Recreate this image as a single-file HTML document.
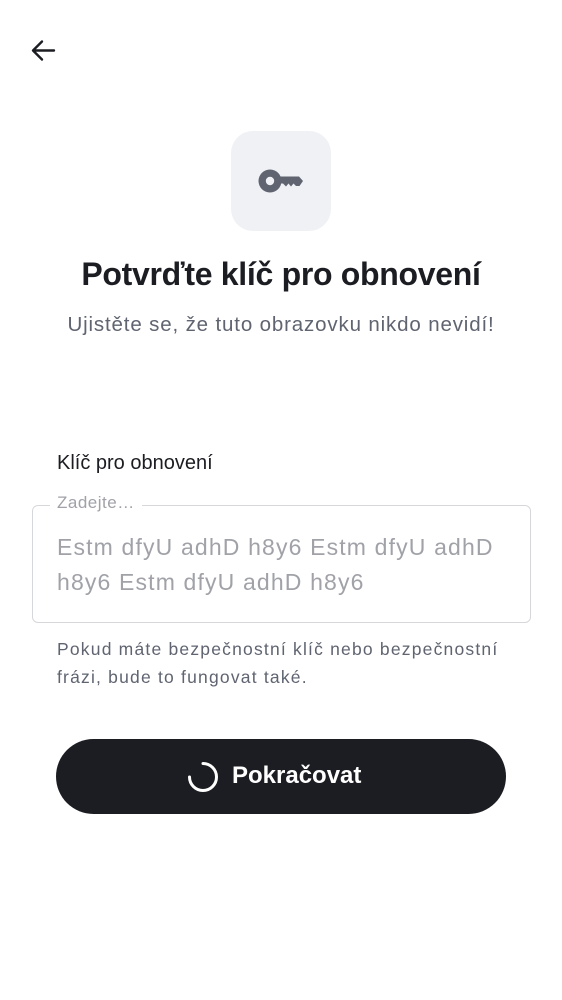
<!DOCTYPE html>
<html><head><meta charset="utf-8"><style>
*{margin:0;padding:0;box-sizing:border-box}
body{width:562px;height:1000px;background:#fff;font-family:"Liberation Sans",Roboto,sans-serif;position:relative;overflow:hidden;color:#1c1d22}
.abs{position:absolute}
</style></head><body>
<svg class="abs" style="left:30px;top:38px" width="26" height="26" viewBox="0 0 26 26"><path d="M24 12.5H4M12 3.5L3 12.5l9 9" fill="none" stroke="#1c1d22" stroke-width="2.4" stroke-linecap="round" stroke-linejoin="round"/></svg>
<div class="abs" style="left:231px;top:131px;width:100px;height:100px;border-radius:22px;background:#f0f1f5"></div>
<svg class="abs" style="left:256px;top:166px" width="50" height="30" viewBox="0 0 50 30">
<circle cx="14" cy="15" r="11.5" fill="#5f6470"/><circle cx="14" cy="15" r="4.2" fill="#f0f1f5"/>
<path d="M22 10.5H43l4 4.5-3.5 5h-3.5l-2.5-2.5-2.5 3-2.5-3-2.5 3-3-3H22z" fill="#5f6470"/></svg>
<div class="abs" style="left:0;width:562px;top:256px;text-align:center;font-size:32px;font-weight:700;letter-spacing:-0.3px">Potvrďte klíč pro obnovení</div>
<div class="abs" style="left:0;width:562px;top:313px;text-align:center;font-size:20.5px;color:#5f6470;letter-spacing:0.85px">Ujistěte se, že tuto obrazovku nikdo nevidí!</div>
<div class="abs" style="left:57px;top:452px;font-size:20px;color:#1c1d22">Klíč pro obnovení</div>
<div class="abs" style="left:32px;top:505px;width:499px;height:118px;border:1.5px solid #d6d7db;border-radius:6px"></div>
<div class="abs" style="left:50px;top:493px;padding:0 7px;background:#fff;font-size:17px;color:#a0a2a8;letter-spacing:0.5px">Zadejte…</div>
<div class="abs" style="left:57px;top:530px;width:450px;font-size:23px;line-height:35px;color:#a0a2a8;letter-spacing:1.15px">Estm dfyU adhD h8y6 Estm dfyU adhD h8y6 Estm dfyU adhD h8y6</div>
<div class="abs" style="left:57px;top:635px;width:455px;font-size:17.5px;line-height:28px;color:#5f6470;letter-spacing:1.2px">Pokud máte bezpečnostní klíč nebo bezpečnostní frázi, bude to fungovat také.</div>
<div class="abs" style="left:56px;top:739px;width:450px;height:75px;border-radius:38px;background:#1c1d22"></div>
<svg class="abs" style="left:186px;top:760px" width="34" height="34" viewBox="0 0 34 34"><path d="M17 3.5A13.5 13.5 0 1 1 3.5 17" fill="none" stroke="#fff" stroke-width="3" stroke-linecap="round"/></svg>
<div class="abs" style="left:232px;top:762px;font-size:24px;font-weight:700;color:#fff">Pokračovat</div>
</body></html>
